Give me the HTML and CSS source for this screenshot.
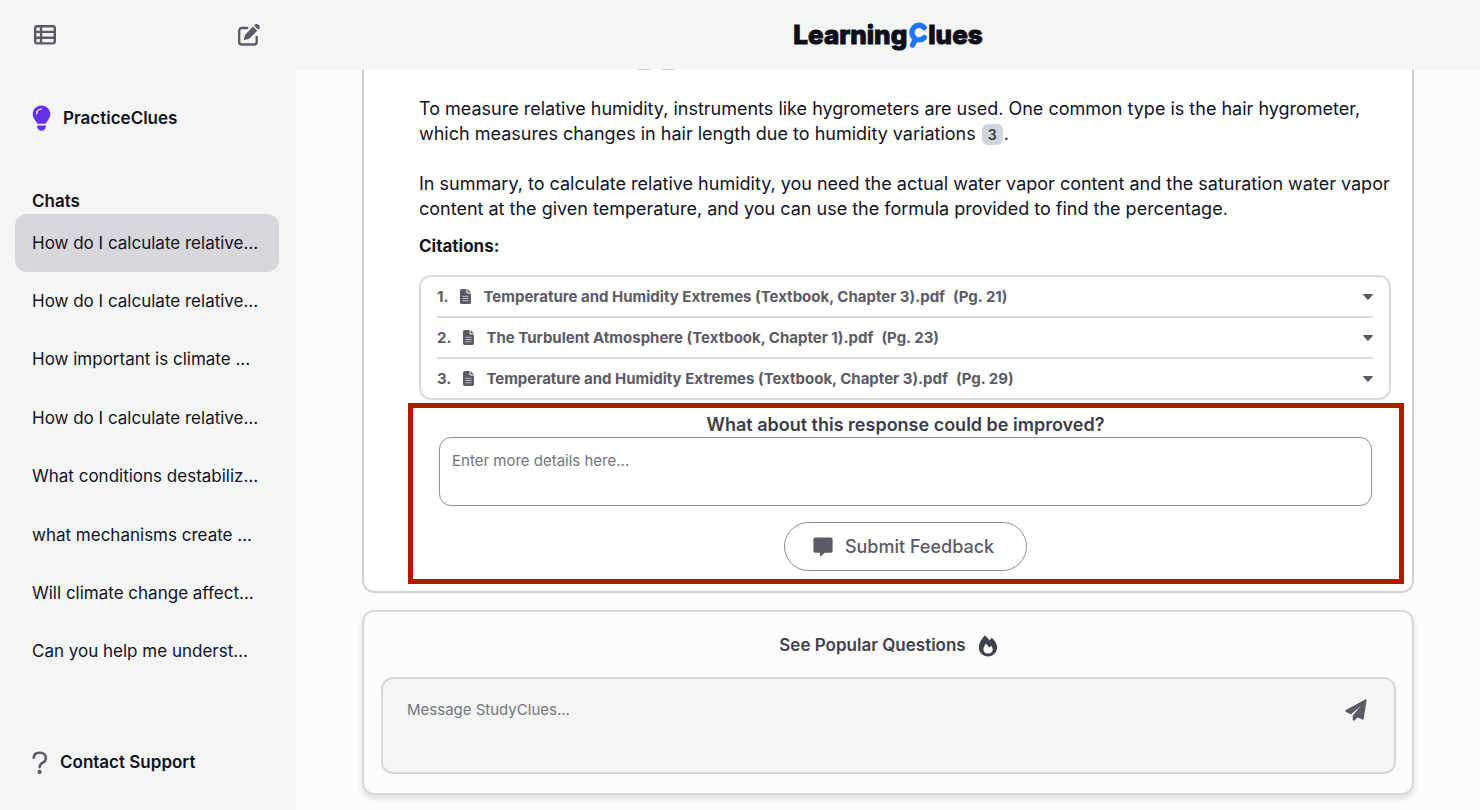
FILE: index.html
```html
<!DOCTYPE html>
<html lang="en">
<head>
  <meta charset="UTF-8">
  <meta name="viewport" content="width=device-width, initial-scale=1">
  <title>LearningClues</title>
  <link rel="stylesheet" href="styles.css">
</head>
<body>
  <div class="layout">
    <aside class="sidebar">
      <div class="sidebar-tools">
        <button class="icon-btn" type="button" aria-label="Toggle chat list">
          <svg width="22" height="20" viewBox="0 0 22 20" fill="none" stroke="#5a5b64">
            <rect x="1.2" y="1.2" width="19.6" height="17.2" rx="1.8" stroke-width="2.4"/>
            <path d="M1 6.9h20M1 12.7h20M7 1v18" stroke-width="2.4"/>
          </svg>
        </button>
        <button class="icon-btn" type="button" aria-label="New chat">
          <svg width="22" height="22" viewBox="0 0 22 22" fill="none">
            <path d="M9.3 4H3.8A2.6 2.6 0 0 0 1.2 6.6v11.3a2.6 2.6 0 0 0 2.6 2.6h12.3a2.6 2.6 0 0 0 2.6-2.6v-5" stroke="#5a5b64" stroke-width="2.3" stroke-linecap="round"/>
            <path d="M15 2.6l4.2 4.2-7.2 7.2c-.6.6-1.1.9-1.8 1.1l-3.6 1c-.5.1-.9-.3-.8-.8l1-3.6c.2-.7.5-1.2 1-1.7zM16 1.6l.9-.9c1-1 2.5-1 3.4 0l.9.9c.9 1 .9 2.4 0 3.3l-.9.9z" fill="#5a5b64"/>
          </svg>
        </button>
      </div>

      <a class="side-link practice" href="#">
        <svg width="19" height="26" viewBox="0 0 19 26">
          <path d="M9.5.5C4.5.5.7 4.3.7 9c0 2.5.9 4.3 2.3 6.1 1.1 1.4 1.8 2.4 2.2 3.7h8.6c.4-1.3 1.1-2.3 2.2-3.7 1.4-1.8 2.3-3.6 2.3-6.1 0-4.7-3.8-8.5-8.8-8.5z" fill="#6231e8"/>
          <path d="M4.6 8.8c.1-2.9 1.9-4.6 4.9-4.7" fill="none" stroke="#f4f6f5" stroke-width="1.4" stroke-linecap="round"/>
          <path d="M5.2 20.4h8.6v1.1c0 2.4-1.9 4.2-4.3 4.2s-4.3-1.8-4.3-4.2z" fill="#6231e8"/>
        </svg>
        PracticeClues
      </a>

      <h2 class="chats-title">Chats</h2>
      <nav class="chats">
        <a class="chat active" href="#">How do I calculate relative…</a>
        <a class="chat" href="#">How do I calculate relative…</a>
        <a class="chat" href="#">How important is climate …</a>
        <a class="chat" href="#">How do I calculate relative…</a>
        <a class="chat" href="#">What conditions destabiliz…</a>
        <a class="chat" href="#">what mechanisms create …</a>
        <a class="chat" href="#">Will climate change affect…</a>
        <a class="chat" href="#">Can you help me underst…</a>
      </nav>

      <a class="side-link support" href="#">
        <svg width="16" height="24" viewBox="0 0 16 24" fill="none">
          <path d="M1.7 6.7C1.9 3.7 4.1 1.7 7.2 1.7h1c3.3 0 5.7 2.1 5.7 5.2 0 2-.9 3.5-2.7 4.6l-1.5.9c-1.3.8-2 1.7-2 3.3v.4" stroke="#5a5b64" stroke-width="2.6" stroke-linecap="round"/>
          <circle cx="7.6" cy="20.9" r="2.1" fill="#5a5b64"/>
        </svg>
        Contact Support
      </a>
    </aside>

    <div class="main">
      <header class="header">
        <a class="logo" href="#" aria-label="LearningClues">
          <span>Learning</span>
          <svg width="20" height="28" viewBox="0 0 20 28" fill="none" stroke="#2173fa" stroke-linecap="round">
            <path d="M16.2 6.6A7.1 7.3 0 1 0 16.2 16.6" stroke-width="5.4"/>
            <path d="M7.2 18.600l-2.600 5.400" stroke-width="5.4"/>
          </svg>
          <span>lues</span>
        </a>
      </header>

      <main class="thread">
        <article class="answer">
          <p class="refs"><span class="ref"></span><span class="ref"></span></p>
          <p>To measure relative humidity, instruments like hygrometers are used. One common type is the hair hygrometer, which measures changes in hair length due to humidity variations <span class="ref">3</span>.</p>
          <p>In summary, to calculate relative humidity, you need the actual water vapor content and the saturation water vapor content at the given temperature, and you can use the formula provided to find the percentage.</p>

          <h3>Citations:</h3>
          <ol class="citations">
            <li>
              <button class="citation" type="button">
                <span>1.</span>
                <svg class="file" width="11" height="15" viewBox="0 0 11 15"><path d="M1.8 0h4.7v3.3c0 .7.5 1.2 1.2 1.2H11v8.7c0 1-.8 1.8-1.8 1.8H1.8C.8 15 0 14.2 0 13.2V1.8C0 .8.8 0 1.8 0zM7.5 0L11 3.5H7.5z"/><path d="M2.5 7.3h6M2.5 9.5h6M2.5 11.7h6"/></svg>
                <span class="name">Temperature and Humidity Extremes (Textbook, Chapter 3).pdf</span>
                <span>(Pg. 21)</span>
                <svg class="caret" width="10" height="6" viewBox="0 0 10 6"><path d="M.7 0h8.6c.6 0 .8.6.4 1L5.600 5.600c-.3.4-.9.4-1.200 0L.3 1C-.1.600.1 0 .7 0z"/></svg>
              </button>
            </li>
            <li>
              <button class="citation" type="button">
                <span>2.</span>
                <svg class="file" width="11" height="15" viewBox="0 0 11 15"><path d="M1.8 0h4.7v3.3c0 .7.5 1.2 1.2 1.2H11v8.7c0 1-.8 1.8-1.8 1.8H1.8C.8 15 0 14.2 0 13.2V1.8C0 .8.8 0 1.8 0zM7.5 0L11 3.5H7.5z"/><path d="M2.5 7.3h6M2.5 9.5h6M2.5 11.7h6"/></svg>
                <span class="name">The Turbulent Atmosphere (Textbook, Chapter 1).pdf</span>
                <span>(Pg. 23)</span>
                <svg class="caret" width="10" height="6" viewBox="0 0 10 6"><path d="M.7 0h8.6c.6 0 .8.6.4 1L5.600 5.600c-.3.4-.9.4-1.200 0L.3 1C-.1.600.1 0 .7 0z"/></svg>
              </button>
            </li>
            <li>
              <button class="citation" type="button">
                <span>3.</span>
                <svg class="file" width="11" height="15" viewBox="0 0 11 15"><path d="M1.8 0h4.7v3.3c0 .7.5 1.2 1.2 1.2H11v8.7c0 1-.8 1.8-1.8 1.8H1.8C.8 15 0 14.2 0 13.2V1.8C0 .8.8 0 1.8 0zM7.5 0L11 3.5H7.5z"/><path d="M2.5 7.3h6M2.5 9.5h6M2.5 11.7h6"/></svg>
                <span class="name">Temperature and Humidity Extremes (Textbook, Chapter 3).pdf</span>
                <span>(Pg. 29)</span>
                <svg class="caret" width="10" height="6" viewBox="0 0 10 6"><path d="M.7 0h8.6c.6 0 .8.6.4 1L5.600 5.600c-.3.4-.9.4-1.200 0L.3 1C-.1.600.1 0 .7 0z"/></svg>
              </button>
            </li>
          </ol>

          <form class="feedback">
            <label for="details">What about this response could be improved?</label>
            <textarea id="details" placeholder="Enter more details here..."></textarea>
            <button class="submit" type="button">
              <svg width="20" height="20" viewBox="0 0 20 20" fill="#5a5b64"><path d="M2.5.5h15C18.8.5 19.6 1.3 19.6 2.5v11.3c0 1.2-.8 2-2.1 2h-5.7l-4 3.4c-.4.3-.9.1-.9-.4v-3H2.5c-1.3 0-2.1-.8-2.1-2V2.5C.4 1.3 1.2.5 2.5.5z"/></svg>
              Submit Feedback
            </button>
          </form>
        </article>
      </main>

      <form class="composer">
        <button class="popular" type="button">
          See Popular Questions
          <svg width="20" height="22" viewBox="0 0 20 22">
            <path d="M7.4.8c1.6 1.4 3 2.9 4.2 4.6.5-.8 1.1-1.5 1.7-2.2.3-.3.7-.3 1 0C17 5.8 19.2 9.4 19.2 12.3c0 5.1-4 9.1-9.200 9.100S.8 17.400.8 12.300C.8 8.600 3.200 4.300 6.500.8c.3-.3.6-.3.9 0z" fill="#3f424d"/>
            <path d="M7.8 8.400l3.500 4 1.800-1.700c1 1.500 1.600 2.700 1.600 3.800 0 2.500-2 4.100-4.600 4.100s-4.700-1.700-4.700-4.200c0-1.800 1-3.500 2.400-6z" fill="#fcfcfc"/>
          </svg>
        </button>
        <div class="message">
          <textarea aria-label="Message StudyClues" placeholder="Message StudyClues..."></textarea>
          <button class="icon-btn" type="button" aria-label="Send">
            <svg width="22" height="22" viewBox="0 0 22 22" fill="#5a5b64"><path d="M20.2.4c.8-.5 1.5.1 1.4.9l-2.900 18.500c-.1.7-.8 1-1.400.8l-4.700-2-2.900 2.700c-.7.7-2 .3-2-.8v-3.300c0-.4.2-.7.4-1l7.500-9.300-8.900 7.900c-.4.4-.9.4-1.400.2l-4.300-2c-.9-.4-.9-1.500-.1-2z"/></svg>
          </button>
        </div>
      </form>
    </div>
  </div>
</body>
</html>
```
FILE: styles.css
```css
* {
  box-sizing: border-box;
}
body {
  margin: 0;
  font-family: Inter, sans-serif;
  font-size: 17px;
  line-height: 25px;
  background: #fcfcfc;
  color: #11131f;
}
button, textarea {
  font: inherit;
  color: inherit;
}
button {
  padding: 0;
  border: 0;
  background: none;
  cursor: pointer;
}
a {
  color: inherit;
  text-decoration: none;
}
svg {
  display: block;
  flex: none;
}
.layout {
  display: grid;
  grid-template-columns: 296px 1fr;
  height: 100vh;
}

/* Sidebar */
.sidebar {
  display: flex;
  flex-direction: column;
  background: #f4f6f5;
}
.sidebar-tools {
  display: flex;
  justify-content: space-between;
  align-items: center;
  height: 69px;
  padding: 0 36px 0 34px;
}
.side-link {
  display: flex;
  align-items: center;
  padding: 0 32px;
  font-weight: 600;
}
.practice {
  gap: 12px;
  margin-top: 36px;
}
.chats-title {
  margin: 58px 0 0 32px;
  font-size: 17px;
  font-weight: 600;
}
.chats {
  display: grid;
  grid-auto-rows: 1fr;
  height: 467px;
  padding: 0 17px 0 15px;
}
.chat {
  display: flex;
  align-items: center;
  padding: 0 17px;
  border-radius: 12px;
  white-space: nowrap;
}
.chat.active {
  background: #d8d7dc;
}
.support {
  gap: 12px;
  margin-top: 69px;
}

/* Header */
.main {
  display: flex;
  flex-direction: column;
  min-width: 0;
  min-height: 0;
}
.header {
  display: flex;
  justify-content: center;
  align-items: center;
  flex: none;
  height: 69px;
  background: #f4f6f5;
}
.logo {
  display: flex;
  align-items: center;
  font-size: 26px;
  font-weight: 800;
  color: #0c0f1a;
  -webkit-text-stroke: 1px #0c0f1a;
}
.logo svg {
  margin-left: 1px;
}

/* Answer */
.thread {
  display: flex;
  flex-direction: column;
  justify-content: flex-end;
  flex: 1;
  min-height: 0;
  margin: 0 66px 17px;
  overflow: hidden;
}
.answer {
  padding: 0 21px 7px 55px;
  background: #fff;
  border: 2px solid #cdd3dc;
  border-radius: 12px;
}
.answer p {
  margin: 0 -8px 25px 0;
  font-size: 18px;
}
.answer .refs {
  display: flex;
  gap: 1px;
  padding: 3px 0 1px 214px;
}
.ref {
  display: inline-block;
  min-width: 21px;
  height: 21px;
  margin: 0 1px;
  border-radius: 6px;
  background: #d0d4dd;
  font-size: 14px;
  font-weight: 600;
  line-height: 21px;
  text-align: center;
  color: #3a3c47;
}
.answer h3 {
  margin: -12px 0 16px;
  font-size: 17px;
  font-weight: 700;
}
.citations {
  margin: 0 0 3px;
  padding: 0 16px;
  border: 2px solid #dadade;
  border-radius: 12px;
  list-style: none;
}
.citations li + li {
  border-top: 2px solid #dadade;
}
.citation {
  display: flex;
  align-items: center;
  width: 100%;
  height: 39px;
  font-size: 15px;
  font-weight: 700;
  color: #5a5b64;
}
.file {
  margin: 0 12px;
  fill: #5a5b64;
  stroke: #b9bac0;
}
.file path:first-child {
  stroke: none;
}
.name {
  margin-right: 8px;
}
.caret {
  margin-left: auto;
  fill: #5a5b64;
}

/* Feedback */
.feedback {
  display: flex;
  flex-direction: column;
  align-items: center;
  margin: 0 -13px 0 -11px;
  padding: 4px 27px 8px 26px;
  border: 5px solid #b51800;
}
.feedback label {
  font-size: 18px;
  font-weight: 600;
  color: #3a3c47;
}
.feedback textarea {
  width: 100%;
  height: 69px;
  margin-bottom: 16px;
  padding: 10px 12px;
  border: 1px solid #8e8f96;
  border-radius: 12px;
  background: #fff;
  font-size: 15px;
  resize: none;
}
textarea::placeholder {
  color: #73747c;
  opacity: 1;
}
.submit {
  display: flex;
  align-items: center;
  gap: 12px;
  height: 49px;
  padding: 0 32px 0 28px;
  border: 1px solid #8a8b92;
  border-radius: 25px;
  font-size: 18px;
  font-weight: 500;
  color: #5a5b64;
}

/* Message box */
.composer {
  flex: none;
  margin: 0 66px 15px;
  padding: 21px 16px 19px 17px;
  border: 2px solid #d6d7da;
  border-radius: 12px;
  box-shadow: 0 4px 6px rgba(0, 0, 0, 0.1);
}
.popular {
  display: flex;
  align-items: center;
  gap: 12px;
  margin: 0 auto 19px;
  font-weight: 600;
  color: #3f424d;
}
.message {
  display: flex;
  align-items: flex-start;
  height: 97px;
  padding: 18px 27px 0 24px;
  border: 2px solid #d6d7da;
  border-radius: 12px;
  background: #f4f6f5;
}
.message textarea {
  flex: 1;
  height: 60px;
  padding: 0;
  border: 0;
  background: none;
  font-size: 15px;
  resize: none;
}
.message .icon-btn {
  display: flex;
  align-items: center;
  height: 26px;
}
```
